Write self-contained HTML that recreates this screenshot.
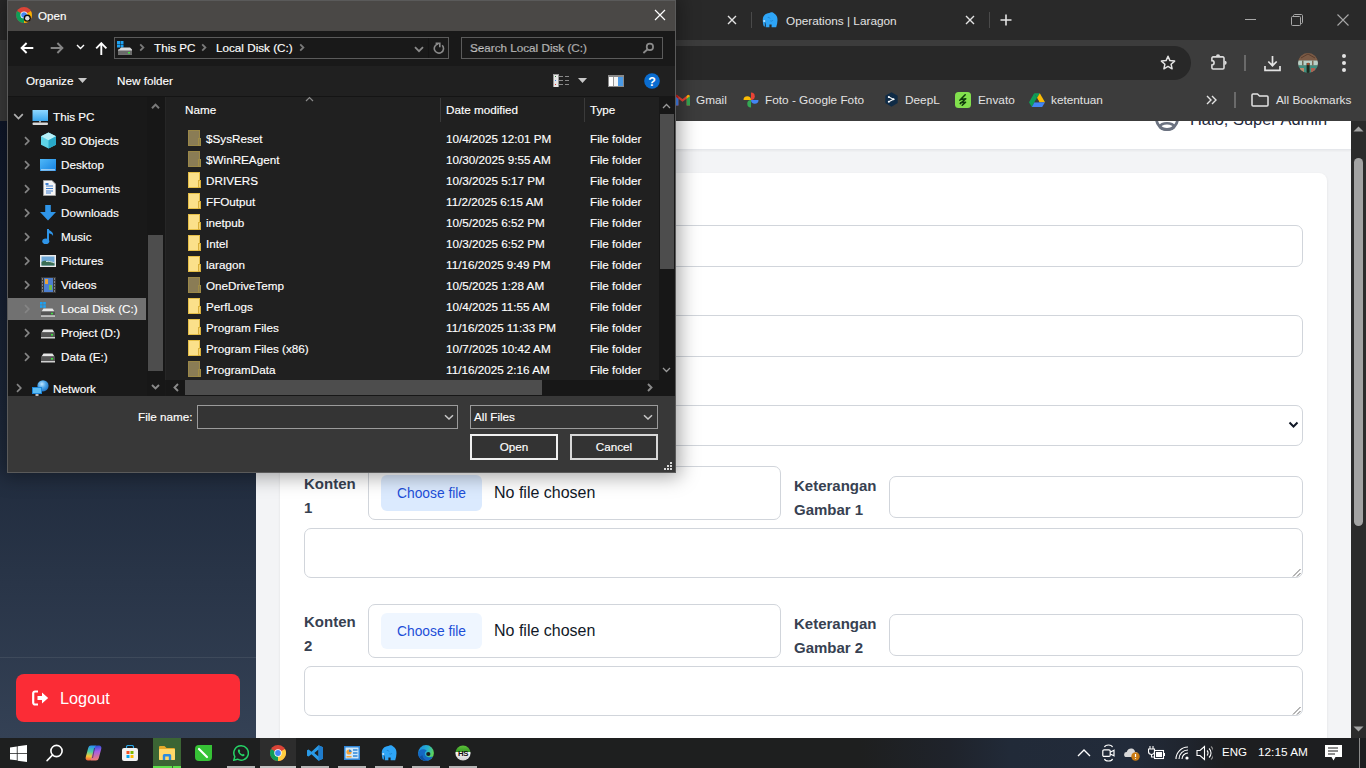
<!DOCTYPE html>
<html><head><meta charset="utf-8">
<style>
*{box-sizing:border-box;margin:0;padding:0}
html,body{width:1366px;height:768px;overflow:hidden;background:#1f1f1f;font-family:"Liberation Sans",sans-serif}
.a{position:absolute}
.t{position:absolute;white-space:nowrap;line-height:1}
/* chrome */
#tabs{left:0;top:0;width:1366px;height:40px;background:#292929}
#toolbar{left:0;top:40px;width:1366px;height:81px;background:#3c3c3c}
#omni{left:20px;top:46px;width:1171px;height:34px;border-radius:17px;background:#282828}
.bm{color:#e3e3e3;font-size:11.8px}
/* page */
#page{left:0;top:121px;width:1351px;height:617px;background:#f3f4f6;overflow:hidden}
#side{left:0;top:0;width:256px;height:617px;background:linear-gradient(#0f172a,#1e293b 50%,#344155)}
#hdr{left:256px;top:-10px;width:1095px;height:39px;background:#fff;border-bottom:1px solid #e5e7eb;box-shadow:0 1px 2px rgba(0,0,0,.05)}
#card{left:280px;top:52px;width:1047px;height:700px;background:#fff;border-radius:8px;box-shadow:0 1px 3px rgba(0,0,0,.08)}
.inp{position:absolute;background:#fff;border:1px solid #d1d5db;border-radius:7px}
.lbl{position:absolute;color:#374151;font-weight:700;font-size:15px;line-height:24px;white-space:nowrap}
#vsb{left:1351px;top:121px;width:15px;height:617px;background:#2b2b2b}
/* taskbar */
#task{left:0;top:738px;width:1366px;height:30px;background:linear-gradient(to right,#1e1f1f 0,#1e1f1f 860px,#1f232b 950px,#212a38 1010px,#222b3a 1130px,#1f242d 1190px,#1d1e20 1225px,#1d1e20 1366px)}
/* dialog */
#dlg{left:7px;top:0;width:669px;height:473px;background:#383838;border:1px solid #5a5a5a;box-shadow:0 0 18px 4px rgba(0,0,0,.35)}
.dt{position:absolute;white-space:nowrap;color:#fff;font-size:11.7px;line-height:16px;-webkit-text-stroke:0.15px #fff}
.fold{position:absolute;left:188px;width:12px;height:16px;background:#fbe08a;box-shadow:inset 0 0 0 1px #e6bf48}
.fold:after{content:"";position:absolute;left:10px;bottom:0;width:3px;height:8px;background:#f6d572;border:1px solid #d9b03c;box-sizing:border-box}
.fold.hid{background:#8a7c55;box-shadow:inset 0 0 0 1px #9b8848}
.fold.hid:after{background:#8f8050;border-color:#a08c46}
</style></head><body>
<!-- CHROME -->
<div class="a" id="tabs"></div>
<div class="a" id="toolbar"></div>
<div class="a" id="omni"></div>
<div class="t" style="left:786px;top:15.5px;color:#e3e3e3;font-size:11.8px">Operations | Laragon</div>
<div class="t bm" style="left:696px;top:95px">Gmail</div>
<div class="t bm" style="left:765px;top:95px">Foto - Google Foto</div>
<div class="t bm" style="left:905px;top:95px">DeepL</div>
<div class="t bm" style="left:978px;top:95px">Envato</div>
<div class="t bm" style="left:1051px;top:95px">ketentuan</div>
<div class="t bm" style="left:1276px;top:95px">All Bookmarks</div>
<!-- tab close / separators -->
<svg class="a" style="left:727px;top:15px" width="10" height="10" viewBox="0 0 10 10"><path d="M1 1L9 9M9 1L1 9" stroke="#e3e3e3" stroke-width="1.4"/></svg>
<div class="a" style="left:751px;top:12px;width:1px;height:16px;background:#4a4a4a"></div>
<svg class="a" style="left:761px;top:11px" width="17" height="17" viewBox="0 0 17 17"><path d="M1.8 9.5C1.5 5.2 4.2 2.3 8.3 2C9.8 0.9 12 1.2 13.2 2.6C15.6 3.8 16.6 6.3 16.5 9.3C16.4 11.6 16 13.8 15.2 16.2H10.6V13.4H8.4V16.2H4.7V12.5C4.3 13.8 3.9 15 3.2 16C2.2 14.5 1.9 12 1.8 9.5Z" fill="#2ea5f7"/><ellipse cx="3.2" cy="10" rx="1.1" ry="0.8" fill="#f2f8ff"/><path d="M4.1 11.5L4.6 15.6" stroke="#1a3550" stroke-width="0.8"/><path d="M6.5 7C7 6 8.5 6.2 9 7.5M9.3 9.8C10.3 10.5 11.5 10 12 9" stroke="#1c7fcc" stroke-width="0.8" fill="none"/></svg>
<svg class="a" style="left:965px;top:15px" width="10" height="10" viewBox="0 0 10 10"><path d="M1 1L9 9M9 1L1 9" stroke="#e3e3e3" stroke-width="1.4"/></svg>
<div class="a" style="left:989px;top:12px;width:1px;height:16px;background:#4a4a4a"></div>
<svg class="a" style="left:1000px;top:14px" width="12" height="12" viewBox="0 0 12 12"><path d="M6 0.5V11.5M0.5 6H11.5" stroke="#e3e3e3" stroke-width="1.6"/></svg>
<!-- window controls -->
<div class="a" style="left:1245px;top:19px;width:11px;height:1px;background:#a8a8a8"></div>
<svg class="a" style="left:1291px;top:14px" width="12" height="12" viewBox="0 0 12 12"><rect x="0.5" y="2.5" width="9" height="9" rx="1" stroke="#a8a8a8" fill="none"/><path d="M2.5 2.5V1.5C2.5 1 3 0.5 3.5 0.5H10.5C11 0.5 11.5 1 11.5 1.5V8.5C11.5 9 11 9.5 10.5 9.5H9.5" stroke="#a8a8a8" fill="none"/></svg>
<svg class="a" style="left:1337px;top:14px" width="12" height="12" viewBox="0 0 12 12"><path d="M0.5 0.5L11.5 11.5M11.5 0.5L0.5 11.5" stroke="#a8a8a8" stroke-width="1.1"/></svg>
<!-- toolbar icons -->
<svg class="a" style="left:1160px;top:55px" width="16" height="16" viewBox="0 0 16 16"><path d="M8 1.3L9.9 5.6L14.6 6.1L11.1 9.2L12.1 13.8L8 11.4L3.9 13.8L4.9 9.2L1.4 6.1L6.1 5.6Z" stroke="#e3e3e3" stroke-width="1.5" fill="none" stroke-linejoin="round"/></svg>
<svg class="a" style="left:1208px;top:52px" width="22" height="20" viewBox="0 0 22 20"><path d="M5.1 4.9H14.8A1.2 1.2 0 0 1 16 6.1V15.8A1.2 1.2 0 0 1 14.8 17H5.1A1.2 1.2 0 0 1 3.9 15.8V13A2.2 2.2 0 0 0 3.9 8.6V6.1A1.2 1.2 0 0 1 5.1 4.9Z" stroke="#dcdcdc" stroke-width="1.6" fill="none"/><path d="M7.9 4.4A2.1 2.1 0 0 1 12.1 4.4Z" fill="#dcdcdc"/><path d="M16.6 8.7A2.1 2.1 0 0 1 16.6 12.9Z" fill="#dcdcdc"/></svg>
<div class="a" style="left:1244px;top:55px;width:1.5px;height:16px;background:#6a6a6a"></div>
<svg class="a" style="left:1264px;top:55px" width="17" height="17" viewBox="0 0 17 17"><path d="M8.5 1V10.5M4.3 6.5L8.5 10.7L12.7 6.5" stroke="#e3e3e3" stroke-width="1.7" fill="none"/><path d="M1 11V15.3H16V11" stroke="#e3e3e3" stroke-width="1.7" fill="none"/></svg>
<svg class="a" style="left:1298px;top:53px" width="20" height="20" viewBox="0 0 20 20"><defs><clipPath id="av"><circle cx="10" cy="10" r="10"/></clipPath></defs><g clip-path="url(#av)"><rect width="20" height="20" fill="#5e4c3e"/><rect x="0" y="0" width="20" height="7.5" fill="#7a5a45"/><path d="M3 5L10 1L17 5" stroke="#5a3e2e" stroke-width="1" fill="none"/><rect x="0" y="7.5" width="20" height="5" fill="#b8cfc6"/><rect x="4" y="7.5" width="1.5" height="5" fill="#6a6a55"/><rect x="14" y="7.5" width="1.5" height="5" fill="#7a6a55"/><rect x="0" y="12.5" width="20" height="7.5" fill="#3f8f80"/><rect x="2" y="15" width="4" height="5" fill="#c08a6a"/><rect x="13" y="15" width="4" height="4" fill="#b06050"/><rect x="8.6" y="10" width="3" height="10" fill="#1f2a1e"/><circle cx="10.2" cy="11" r="1.3" fill="#a04a2a"/></g></svg>
<div class="a" style="left:1342px;top:54px;width:4px;height:4px;border-radius:2px;background:#e3e3e3"></div>
<div class="a" style="left:1342px;top:61px;width:4px;height:4px;border-radius:2px;background:#e3e3e3"></div>
<div class="a" style="left:1342px;top:68px;width:4px;height:4px;border-radius:2px;background:#e3e3e3"></div>
<!-- bookmark icons -->
<svg class="a" style="left:675px;top:94px" width="15" height="12" viewBox="0 0 15 12"><path d="M0 2V11.5H3.4V4.8L7.5 7.8L11.6 4.8V11.5H15V2L13.3 0.8L7.5 5L1.7 0.8Z" fill="#ea4335"/><path d="M0 2V11.5H3.4V4.8Z" fill="#4285f4"/><path d="M15 2V11.5H11.6V4.8Z" fill="#34a853"/><path d="M11.6 4.8L15 2L13.3 0.8L11.6 2Z" fill="#fbbc04"/><path d="M0 2L1.7 0.8L3.4 2V4.8Z" fill="#c5221f"/></svg>
<svg class="a" style="left:743px;top:92px" width="16" height="16" viewBox="0 0 16 16"><path d="M8 8H0.5A3.75 3.75 0 0 1 8 8Z" fill="#fbbc04"/><path d="M8 8V0.5A3.75 3.75 0 0 1 8 8Z" fill="#ea4335"/><path d="M8 8H15.5A3.75 3.75 0 0 1 8 8Z" fill="#4285f4"/><path d="M8 8V15.5A3.75 3.75 0 0 1 8 8Z" fill="#34a853"/></svg>
<svg class="a" style="left:885px;top:92px" width="13" height="15" viewBox="0 0 13 15"><path d="M6.5 0.3L12.7 3.8V11L6.5 14.7L0.3 11V3.8Z" fill="#0f2b46"/><path d="M3.8 5L8.5 7.3L3.8 9.8" stroke="#fff" stroke-width="1.1" fill="none"/><circle cx="3.8" cy="5" r="1" fill="#fff"/><circle cx="8.5" cy="7.3" r="1" fill="#fff"/><circle cx="3.8" cy="9.8" r="1" fill="#fff"/></svg>
<svg class="a" style="left:955px;top:92px" width="16" height="16" viewBox="0 0 16 16"><rect width="16" height="16" rx="3.5" fill="#82e04d"/><path d="M10.2 2.8L4.8 8.2M5.5 7.6L10.8 6.8L5.2 11.6M5.6 10.8L10.6 10.2L7.2 13.2" stroke="#0f3a0c" stroke-width="1.5" fill="none" stroke-linecap="round" stroke-linejoin="round"/></svg>
<svg class="a" style="left:1029px;top:93px" width="16" height="14" viewBox="0 0 16 14"><path d="M5.2 0.3H10.8L8 5.1Z" fill="#0f9d58"/><path d="M5.2 0.3L0 9.3L2.8 14L8 5.1Z" fill="#0f9d58"/><path d="M10.8 0.3L16 9.3H10.4L8 5.1Z" fill="#fbbc04"/><path d="M16 9.3L13.2 14H2.8L5.5 9.3Z" fill="#4285f4"/><path d="M8 5.1L10.4 9.3H5.5Z" fill="#3c3c3c"/></svg>
<svg class="a" style="left:1206px;top:95px" width="12" height="10" viewBox="0 0 12 10"><path d="M1 1L5 5L1 9M6 1L10 5L6 9" stroke="#e3e3e3" stroke-width="1.4" fill="none"/></svg>
<div class="a" style="left:1234px;top:92px;width:1.5px;height:16px;background:#6a6a6a"></div>
<svg class="a" style="left:1251px;top:93px" width="18" height="14" viewBox="0 0 18 14"><path d="M1 2A1 1 0 0 1 2 1H6.5L8.5 3H16A1 1 0 0 1 17 4V12A1 1 0 0 1 16 13H2A1 1 0 0 1 1 12Z" stroke="#e3e3e3" stroke-width="1.5" fill="none" stroke-linejoin="round"/></svg>

<!-- PAGE -->
<div class="a" id="page">
  <div class="a" id="side"></div>
  <div class="a" style="left:0;top:536px;width:256px;height:1px;background:rgba(255,255,255,.08)"></div>
  <div class="a" style="left:16px;top:553px;width:224px;height:48px;background:#fb2c36;border-radius:8px"></div>
  <div class="t" style="left:60px;top:569px;color:#fff;font-size:16.3px">Logout</div>
  <div class="a" id="hdr"></div>
  <div class="t" style="left:1190px;top:-10px;color:#1e293b;font-size:16.45px">Halo, Super Admin</div>
  <svg class="a" style="left:1155px;top:-14px" width="24" height="24" viewBox="0 0 24 24"><circle cx="12" cy="12" r="10.5" stroke="#6b7280" stroke-width="2.8" fill="none"/><circle cx="12" cy="9.5" r="4" fill="#6b7280"/><ellipse cx="12" cy="19.5" rx="7" ry="3.2" fill="none" stroke="#6b7280" stroke-width="2.6"/></svg>
  <div class="a" id="card"></div>
  <div class="inp" style="left:304px;top:104px;width:999px;height:42px"></div>
  <div class="inp" style="left:304px;top:194px;width:999px;height:42px"></div>
  <div class="inp" style="left:304px;top:284px;width:999px;height:41px"></div>
  <div class="lbl" style="left:304px;top:351px">Konten<br>1</div>
  <div class="inp" style="left:368px;top:345px;width:413px;height:54px"></div>
  <div class="a" style="left:381px;top:354px;width:101px;height:36px;background:#dbeafe;border-radius:6px"></div>
  <div class="t" style="left:397px;top:366px;color:#1d4ed8;font-size:13.8px">Choose file</div>
  <div class="t" style="left:494px;top:364px;color:#111827;font-size:16px">No file chosen</div>
  <div class="lbl" style="left:794px;top:353px">Keterangan<br>Gambar 1</div>
  <div class="inp" style="left:889px;top:355px;width:414px;height:42px"></div>
  <div class="inp" style="left:304px;top:407px;width:999px;height:50px"></div>
  <div class="lbl" style="left:304px;top:489px">Konten<br>2</div>
  <div class="inp" style="left:368px;top:483px;width:413px;height:54px"></div>
  <div class="a" style="left:381px;top:492px;width:101px;height:36px;background:#eff6ff;border-radius:6px"></div>
  <div class="t" style="left:397px;top:504px;color:#1d4ed8;font-size:13.8px">Choose file</div>
  <div class="t" style="left:494px;top:502px;color:#111827;font-size:16px">No file chosen</div>
  <div class="lbl" style="left:794px;top:491px">Keterangan<br>Gambar 2</div>
  <div class="inp" style="left:889px;top:493px;width:414px;height:42px"></div>
  <div class="inp" style="left:304px;top:545px;width:999px;height:50px"></div>
</div>
<div class="a" id="vsb"></div>
<!-- page extras -->
<svg class="a" style="left:1288px;top:421px" width="11" height="8" viewBox="0 0 11 8"><path d="M1.5 1.5L5.5 5.5L9.5 1.5" stroke="#111827" stroke-width="2" fill="none"/></svg>
<svg class="a" style="left:1292px;top:568px" width="9" height="9" viewBox="0 0 9 9"><path d="M8.5 1L1 8.5M8.5 5L5 8.5" stroke="#6b6b6b" stroke-width="1"/></svg>
<svg class="a" style="left:1292px;top:706px" width="9" height="9" viewBox="0 0 9 9"><path d="M8.5 1L1 8.5M8.5 5L5 8.5" stroke="#6b6b6b" stroke-width="1"/></svg>
<svg class="a" style="left:32px;top:690px" width="17" height="16" viewBox="0 0 17 16"><path d="M6 1.5H3A1.8 1.8 0 0 0 1.2 3.3V12.7A1.8 1.8 0 0 0 3 14.5H6" stroke="#fff" stroke-width="2.2" fill="none"/><path d="M5.5 6H10V2.5L16.2 8L10 13.5V10H5.5Z" fill="#fff"/></svg>
<!-- page scrollbar -->
<svg class="a" style="left:1353px;top:126px" width="11" height="6" viewBox="0 0 11 6"><path d="M0.5 5.5L5.5 0.5L10.5 5.5Z" fill="#a3a3a3"/></svg>
<div class="a" style="left:1354px;top:158px;width:9px;height:368px;border-radius:4.5px;background:#a3a3a3"></div>
<svg class="a" style="left:1353px;top:726px" width="11" height="6" viewBox="0 0 11 6"><path d="M0.5 0.5L10.5 0.5L5.5 5.5Z" fill="#a3a3a3"/></svg>

<!-- TASKBAR -->
<div class="a" id="task"></div>
<svg class="a" style="left:10px;top:745px" width="17" height="17" viewBox="0 0 17 17" fill="#fff"><path d="M0 2.4L6.8 1.4V7.9H0Z"/><path d="M7.6 1.3L17 0V7.9H7.6Z"/><path d="M0 8.7H6.8V15.3L0 14.4Z"/><path d="M7.6 8.7H17V17L7.6 15.7Z"/></svg>
<svg class="a" style="left:46px;top:744px" width="18" height="18" viewBox="0 0 18 18"><circle cx="10.5" cy="7" r="5.6" stroke="#fff" stroke-width="1.6" fill="none"/><path d="M6.5 11L1.2 16.5" stroke="#fff" stroke-width="1.8" stroke-linecap="round"/></svg>
<svg class="a" style="left:85px;top:745px" width="17" height="16" viewBox="0 0 17 16"><defs><linearGradient id="cp1" x1="0.3" y1="0" x2="0.2" y2="1"><stop offset="0" stop-color="#2a8ff0"/><stop offset=".4" stop-color="#4fd0a0"/><stop offset=".7" stop-color="#f4c838"/><stop offset="1" stop-color="#f25b3a"/></linearGradient><linearGradient id="cp2" x1="0.5" y1="0" x2="0.6" y2="1"><stop offset="0" stop-color="#2450d8"/><stop offset=".4" stop-color="#a35ee8"/><stop offset="1" stop-color="#f6806a"/></linearGradient></defs><path d="M6 0.5H11.5L7.5 13C7 14.8 6 15.5 4.5 15.5H3C1.2 15.5 0.2 14 0.7 12.2L3.2 3C3.7 1.3 4.6 0.5 6 0.5Z" fill="url(#cp1)"/><path d="M11 15.5H5.5L9.5 3C10 1.2 11 0.5 12.5 0.5H14C15.8 0.5 16.8 2 16.3 3.8L13.8 13C13.3 14.7 12.4 15.5 11 15.5Z" fill="url(#cp2)"/><path d="M9.5 3L7.5 13" stroke="#1a1a1a" stroke-width="0.9" opacity="0.6"/></svg>
<svg class="a" style="left:122px;top:745px" width="16" height="16" viewBox="0 0 16 16"><path d="M4.5 3V2A1.5 1.5 0 0 1 6 0.5H10A1.5 1.5 0 0 1 11.5 2V3" stroke="#29a7e8" stroke-width="1.2" fill="none"/><rect x="0" y="3" width="16" height="13" rx="2" fill="#f2f2f2"/><rect x="4.5" y="6" width="3" height="3" fill="#f25022"/><rect x="8.5" y="6" width="3" height="3" fill="#7fba00"/><rect x="4.5" y="10" width="3" height="3" fill="#00a4ef"/><rect x="8.5" y="10" width="3" height="3" fill="#ffb900"/></svg>
<div class="a" style="left:153px;top:738px;width:28px;height:30px;background:#3b6534"></div>
<div class="a" style="left:153px;top:766px;width:19px;height:2px;background:#5fe04a"></div>
<div class="a" style="left:173px;top:766px;width:8px;height:2px;background:#5fe04a"></div>
<svg class="a" style="left:159px;top:746px" width="16" height="14" viewBox="0 0 16 14"><path d="M0 1A1 1 0 0 1 1 0H5.5L7.5 2H15A1 1 0 0 1 16 3V13A1 1 0 0 1 15 14H1A1 1 0 0 1 0 13Z" fill="#e4a92a"/><rect x="0" y="3" width="16" height="11" rx="0.8" fill="#ffd86a"/><path d="M3.8 14V9.5A1.5 1.5 0 0 1 5.3 8H10.7A1.5 1.5 0 0 1 12.2 9.5V14H9.8V10.5H6.2V14Z" fill="#2b8be0"/></svg>
<svg class="a" style="left:195px;top:745px" width="17" height="16" viewBox="0 0 17 16"><path d="M0 4A4 4 0 0 1 4 0H17V12A4 4 0 0 1 13 16H4A4 4 0 0 1 0 12Z" fill="#36c236"/><path d="M4 4L12 12" stroke="#fff" stroke-width="2.2" stroke-linecap="round"/></svg>
<svg class="a" style="left:233px;top:745px" width="16" height="16" viewBox="0 0 16 16"><path d="M8 0.8A7.2 7.2 0 0 0 1.8 11.6L0.8 15.2L4.5 14.2A7.2 7.2 0 1 0 8 0.8Z" stroke="#25d366" stroke-width="1.5" fill="none"/><path d="M5.2 4.5C4.5 5.5 4.8 7.5 6.8 9.4C8.8 11.3 10.5 11.5 11.4 10.8L11.5 9.6L10 8.8L9.3 9.5C8.5 9.2 7 7.8 6.6 7L7.3 6.2L6.6 4.6Z" fill="#25d366"/></svg>
<div class="a" style="left:260px;top:738px;width:36px;height:30px;background:#2d2d2d"></div>
<svg class="a" style="left:270px;top:745px" width="16" height="16" viewBox="0 0 16 16"><circle cx="8" cy="8" r="8" fill="#db4437"/><path d="M8 8L1.07 4A8 8 0 0 0 8 16Z" fill="#0f9d58"/><path d="M8 8L8 16A8 8 0 0 0 14.93 4Z" fill="#ffcd40"/><circle cx="8" cy="8" r="3.7" fill="#fff"/><circle cx="8" cy="8" r="2.9" fill="#4285f4"/></svg>
<svg class="a" style="left:307px;top:745px" width="16" height="16" viewBox="0 0 16 16"><path d="M11.5 0.3L16 2.3V13.7L11.5 15.7L4.5 9.3L1.6 11.6L0 10.8V5.2L1.6 4.4L4.5 6.7ZM11.5 4.6L7.3 8L11.5 11.4Z" fill="#2a9ae6"/><path d="M11.5 0.3L16 2.3V13.7L11.5 15.7Z" fill="#1f7ccc"/></svg>
<svg class="a" style="left:344px;top:746px" width="16" height="14" viewBox="0 0 16 14"><rect x="0" y="0" width="16" height="14" fill="#2f86d8"/><rect x="1.5" y="1.5" width="13" height="11" fill="#cfe8fa"/><circle cx="5" cy="6" r="2.6" fill="#f3a33a"/><path d="M5 6V3.4A2.6 2.6 0 0 1 7.6 6Z" fill="#2f86d8"/><path d="M9 4H13.5M9 7H13.5M9 10H13.5" stroke="#2f86d8" stroke-width="1.3"/><rect x="2.5" y="10" width="5" height="1.5" fill="#f3a33a"/></svg>
<svg class="a" style="left:380px;top:744px" width="17" height="17" viewBox="0 0 17 17"><path d="M1.8 9.5C1.5 5.2 4.2 2.3 8.3 2C9.8 0.9 12 1.2 13.2 2.6C15.6 3.8 16.6 6.3 16.5 9.3C16.4 11.6 16 13.8 15.2 16.2H10.6V13.4H8.4V16.2H4.7V12.5C4.3 13.8 3.9 15 3.2 16C2.2 14.5 1.9 12 1.8 9.5Z" fill="#2ea5f7"/><ellipse cx="3.2" cy="10" rx="1.1" ry="0.8" fill="#f2f8ff"/><path d="M4.1 11.5L4.6 15.6" stroke="#1a3550" stroke-width="0.8"/><path d="M6.5 7C7 6 8.5 6.2 9 7.5M9.3 9.8C10.3 10.5 11.5 10 12 9" stroke="#1c7fcc" stroke-width="0.8" fill="none"/></svg>
<svg class="a" style="left:418px;top:745px" width="16" height="16" viewBox="0 0 16 16"><defs><linearGradient id="ed1" x1="0" y1="0.2" x2="1" y2="0.5"><stop offset="0" stop-color="#1a8be0"/><stop offset=".55" stop-color="#27b0d0"/><stop offset="1" stop-color="#62da4e"/></linearGradient></defs><circle cx="8" cy="8" r="7.9" fill="url(#ed1)"/><path d="M0.3 8.5C0.8 4.5 5.5 3 8.8 5.8C7.2 6.5 6.5 8 7 9.8C7.8 12.3 11.2 13 14.9 11.3C13.6 14.2 11 15.9 8 15.9C3.6 15.9 0.1 12.6 0.3 8.5Z" fill="#1468c4"/><path d="M1.5 12C3 14.5 5.5 15.9 8 15.9C9 15.9 10 15.7 11 15.3C7 15.5 4.5 13 4.5 10" fill="#0f4f9e"/><circle cx="10.3" cy="9" r="2.1" fill="#1c1c1c"/></svg>
<svg class="a" style="left:455px;top:745px" width="16" height="16" viewBox="0 0 16 16"><defs><linearGradient id="hsg" x1="0" y1="0" x2="0" y2="1"><stop offset="0" stop-color="#5cc43a"/><stop offset=".42" stop-color="#3a9a25"/><stop offset=".43" stop-color="#fafafa"/><stop offset="1" stop-color="#cfcfcf"/></linearGradient></defs><circle cx="8" cy="8" r="7.6" fill="url(#hsg)"/><text x="8" y="11.3" text-anchor="middle" font-family="Liberation Sans" font-weight="700" font-size="7.8" fill="#111" letter-spacing="-0.3">HS</text></svg>
<div class="a" style="left:227px;top:766px;width:28px;height:2px;background:#b5b5b5"></div>
<div class="a" style="left:260px;top:766px;width:36px;height:2px;background:#c4c4c4"></div>
<div class="a" style="left:301px;top:766px;width:28px;height:2px;background:#b5b5b5"></div>
<div class="a" style="left:338px;top:766px;width:28px;height:2px;background:#b5b5b5"></div>
<div class="a" style="left:375px;top:766px;width:28px;height:2px;background:#b5b5b5"></div>
<div class="a" style="left:412px;top:766px;width:28px;height:2px;background:#b5b5b5"></div>
<div class="a" style="left:449px;top:766px;width:28px;height:2px;background:#b5b5b5"></div>
<!-- tray -->
<svg class="a" style="left:1077px;top:748px" width="14" height="9" viewBox="0 0 14 9"><path d="M1 8L7 2L13 8" stroke="#fff" stroke-width="1.4" fill="none"/></svg>
<svg class="a" style="left:1102px;top:744px" width="13" height="18" viewBox="0 0 13 18"><path d="M2.5 3.2C2.8 1.8 4.5 1 6.5 1C8.5 1 10.2 1.8 10.5 3.2M2.5 14.8C2.8 16.2 4.5 17 6.5 17C8.5 17 10.2 16.2 10.5 14.8" stroke="#fff" stroke-width="1.1" fill="none"/><rect x="0.8" y="5.8" width="7.4" height="6.6" rx="1.2" stroke="#fff" stroke-width="1.2" fill="none"/><path d="M8.2 8.2L12 6.3V11.9L8.2 10" stroke="#fff" stroke-width="1.2" fill="none"/></svg>
<svg class="a" style="left:1124px;top:747px" width="17" height="14" viewBox="0 0 17 14"><path d="M2.5 10A2.5 2.5 0 0 1 2.7 5C3.5 2 6 1 8 1.5C10 2 11 3.5 11 5A2.5 2.5 0 0 1 12 10Z" fill="#d8d8d8"/><circle cx="11.5" cy="9.5" r="4.2" fill="#c97a12"/><path d="M11.5 7V10M11.5 11.3V12" stroke="#fff" stroke-width="1.2"/></svg>
<svg class="a" style="left:1148px;top:746px" width="17" height="14" viewBox="0 0 17 14"><path d="M2 0V3M5 0V3M0.5 3H6.5V5.5A3 3 0 0 1 3.5 8.5A3 3 0 0 1 0.5 5.5Z" stroke="#fff" stroke-width="1.1" fill="none"/><path d="M3.5 8.5V11H6" stroke="#fff" stroke-width="1.1" fill="none"/><rect x="6.5" y="4.5" width="9" height="8" stroke="#fff" stroke-width="1.1" fill="none"/><rect x="8" y="6" width="6" height="5" fill="#fff"/><rect x="15.5" y="7" width="1.5" height="3" fill="#fff"/></svg>
<svg class="a" style="left:1175px;top:746px" width="14" height="14" viewBox="0 0 14 14"><path d="M1 13A12 12 0 0 1 13 1M4 13A9 9 0 0 1 13 4M7 13A6 6 0 0 1 13 7" stroke="#fff" stroke-width="1.1" fill="none"/><circle cx="12" cy="12" r="1.6" fill="#fff"/></svg>
<svg class="a" style="left:1196px;top:745px" width="17" height="16" viewBox="0 0 17 16"><path d="M1 5.5H4L8.5 1.5V14.5L4 10.5H1Z" stroke="#fff" stroke-width="1.1" fill="none"/><path d="M11 5.5A3.5 3.5 0 0 1 11 10.5M13 3.5A6 6 0 0 1 13 12.5" stroke="#fff" stroke-width="1.1" fill="none"/><path d="M15 1.5A9 9 0 0 1 15 14.5" stroke="#888" stroke-width="1.1" fill="none"/></svg>
<div class="t" style="left:1222px;top:747px;color:#fff;font-size:11.5px">ENG</div>
<div class="t" style="left:1258px;top:747px;color:#fff;font-size:11.8px">12:15 AM</div>
<svg class="a" style="left:1325px;top:745px" width="17" height="16" viewBox="0 0 17 16"><path d="M0 0H17V12H10.5L8.5 15.5L6.5 12H0Z" fill="#fff"/><path d="M3 3H13M3 6H13M3 9H10" stroke="#1a1a1a" stroke-width="1"/></svg>
<div class="a" style="left:1359px;top:738px;width:1px;height:30px;background:#8a8a8a"></div>

<!-- DIALOG -->
<div class="a" id="dlg"></div>
<div class="a" style="left:8px;top:1px;width:667px;height:30px;background:#4a4846"></div>
<svg class="a" style="left:16px;top:7px" width="16" height="16" viewBox="0 0 16 16">
 <circle cx="8" cy="8" r="8" fill="#db4437"/>
 <path d="M8 8 L1.1 4 A8 8 0 0 0 8 16 Z" fill="#0f9d58"/>
 <path d="M8 8 L8 16 A8 8 0 0 0 14.9 4 Z" fill="#f4b400"/>
 <circle cx="8" cy="8" r="3.6" fill="#fff"/><circle cx="8" cy="8" r="2.8" fill="#4285f4"/>
 <circle cx="11.3" cy="11.2" r="3.6" fill="#111"/><circle cx="11.3" cy="11.2" r="2.2" fill="#ddd"/>
</svg>
<div class="dt" style="left:38px;top:8px;font-size:11.6px">Open</div>
<svg class="a" style="left:654px;top:9px" width="12" height="12" viewBox="0 0 12 12"><path d="M1 1L11 11M11 1L1 11" stroke="#fff" stroke-width="1.2"/></svg>

<!-- nav row -->
<div class="a" style="left:8px;top:31px;width:667px;height:35px;background:#191919"></div>
<svg class="a" style="left:20px;top:42px" width="14" height="13" viewBox="0 0 14 13"><path d="M13.3 6H2M6.6 1L1.6 6L6.6 11" stroke="#fff" stroke-width="1.9" fill="none"/></svg>
<svg class="a" style="left:50px;top:42px" width="14" height="13" viewBox="0 0 14 13"><path d="M0.7 6H12M7.4 1L12.4 6L7.4 11" stroke="#858585" stroke-width="1.9" fill="none"/></svg>
<svg class="a" style="left:76px;top:44px" width="9" height="6" viewBox="0 0 9 6"><path d="M1 1L4.5 4.5L8 1" stroke="#fff" stroke-width="1.4" fill="none"/></svg>
<svg class="a" style="left:95px;top:42px" width="13" height="13" viewBox="0 0 13 13"><path d="M6.3 13V1.8M1.2 6.3L6.3 1.2L11.4 6.3" stroke="#fff" stroke-width="1.9" fill="none"/></svg>
<div class="a" style="left:114px;top:37px;width:335px;height:22px;border:1px solid #5b5b5b;background:#191919"></div>
<svg class="a" style="left:117px;top:41px" width="16" height="15" viewBox="0 0 16 15">
 <rect x="0" y="0" width="3" height="3" fill="#1da1f2"/><rect x="3.5" y="0" width="3" height="3" fill="#1da1f2"/><rect x="0" y="3.5" width="3" height="3" fill="#1da1f2"/><rect x="3.5" y="3.5" width="3" height="3" fill="#1da1f2"/>
 <path d="M2 8.5L4 6.5H13L15 8.5V13.5H1V8.5Z" fill="#d9d9d9"/><rect x="1" y="9.5" width="14" height="4" fill="#6a6a6a"/><rect x="11" y="11" width="2" height="1.5" fill="#3ee03e"/>
</svg>
<svg class="a" style="left:139px;top:43px" width="6" height="9" viewBox="0 0 6 9"><path d="M1.2 1.3L4.4 4.5L1.2 7.7" stroke="#7a7a7a" stroke-width="1.8" fill="none"/></svg>
<div class="dt" style="left:154px;top:40px">This PC</div>
<svg class="a" style="left:201px;top:43px" width="6" height="9" viewBox="0 0 6 9"><path d="M1.2 1.3L4.4 4.5L1.2 7.7" stroke="#7a7a7a" stroke-width="1.8" fill="none"/></svg>
<div class="dt" style="left:216px;top:40px">Local Disk (C:)</div>
<svg class="a" style="left:299px;top:43px" width="6" height="9" viewBox="0 0 6 9"><path d="M1.2 1.3L4.4 4.5L1.2 7.7" stroke="#7a7a7a" stroke-width="1.8" fill="none"/></svg>
<svg class="a" style="left:414px;top:46px" width="10" height="7" viewBox="0 0 10 7"><path d="M1 1.2L5 5.2L9 1.2" stroke="#8a8a8a" stroke-width="1.8" fill="none"/></svg>
<div class="a" style="left:428px;top:38px;width:1px;height:20px;background:#141414"></div>
<svg class="a" style="left:433px;top:41px" width="13" height="14" viewBox="0 0 13 14"><path d="M9.2 4.3A4.6 4.6 0 1 1 5.3 2.95" stroke="#8a8a8a" stroke-width="1.6" fill="none"/><path d="M2.6 2.3H6.8V6.3" stroke="#8a8a8a" stroke-width="1.6" fill="none"/></svg>
<div class="a" style="left:461px;top:37px;width:202px;height:22px;border:1px solid #5b5b5b;background:#191919"></div>
<div class="dt" style="left:470px;top:40px;color:#9d9d9d">Search Local Disk (C:)</div>
<svg class="a" style="left:642px;top:42px" width="12" height="12" viewBox="0 0 12 12"><circle cx="7.9" cy="4.9" r="3.2" stroke="#8a8a8a" stroke-width="1.7" fill="none"/><path d="M5.6 7.3L1.4 11" stroke="#8a8a8a" stroke-width="1.8"/></svg>

<!-- command bar -->
<div class="a" style="left:8px;top:66px;width:667px;height:30px;background:#202020"></div>
<div class="dt" style="left:26px;top:73px">Organize</div>
<svg class="a" style="left:78px;top:78px" width="9" height="5" viewBox="0 0 9 5"><path d="M0 0H9L4.5 5Z" fill="#c8c8c8"/></svg>
<div class="dt" style="left:117px;top:73px">New folder</div>
<svg class="a" style="left:553px;top:74px" width="17" height="13" viewBox="0 0 17 13" shape-rendering="crispEdges"><rect x="0" y="0" width="5" height="13" fill="#e6e6e6"/><rect x="0" y="0" width="5" height="13" fill="none" stroke="#9a9a9a" stroke-width="1"/><rect x="2" y="2" width="1" height="1" fill="#2e7d32"/><rect x="2" y="6" width="1" height="1" fill="#3b82f6"/><rect x="2" y="10" width="1" height="1" fill="#e53935"/><path d="M6 2.5H10M12 2.5H16M6 6.5H10M12 6.5H16M6 10.5H10M12 10.5H16" stroke="#8a8a8a" stroke-width="1"/></svg>
<svg class="a" style="left:578px;top:78px" width="9" height="5" viewBox="0 0 9 5"><path d="M0 0H9L4.5 5Z" fill="#c8c8c8"/></svg>
<svg class="a" style="left:608px;top:75px" width="16" height="12" viewBox="0 0 16 12" shape-rendering="crispEdges"><rect x="0" y="0" width="16" height="12" fill="#8a8a8a"/><rect x="1" y="2" width="4" height="9" fill="#fff"/><rect x="5" y="2" width="1" height="9" fill="#9a9a9a"/><rect x="6" y="2" width="4" height="9" fill="#f4f4f4"/><rect x="10" y="2" width="5" height="9" fill="#4a9ae6"/></svg>
<svg class="a" style="left:644px;top:73px" width="16" height="16" viewBox="0 0 16 16"><circle cx="8" cy="8" r="7.8" fill="#0a6ccf"/><text x="8" y="12.6" text-anchor="middle" font-family="Liberation Sans" font-weight="700" font-size="12.5" fill="#fff">?</text></svg>

<!-- main area -->
<div class="a" style="left:8px;top:96px;width:667px;height:300px;background:#191919"></div>
<div class="a" style="left:147px;top:96px;width:18px;height:300px;background:#171717"></div>
<div class="a" style="left:148px;top:235px;width:15px;height:136px;background:#4d4d4d"></div>
<svg class="a" style="left:151px;top:103px" width="9" height="6" viewBox="0 0 9 6"><path d="M1 5.2L4.5 1.6L8 5.2" stroke="#7a7a7a" stroke-width="2" fill="none"/></svg>
<svg class="a" style="left:151px;top:384px" width="9" height="6" viewBox="0 0 9 6"><path d="M1 1L4.5 4.5L8 1" stroke="#8a8a8a" stroke-width="1.9" fill="none"/></svg>
<div class="a" style="left:165px;top:97px;width:2px;height:283px;background:#262626"></div>
<div class="a" style="left:166px;top:96px;width:493px;height:284px;background:#202020"></div>
<div class="a" style="left:8px;top:96px;width:667px;height:1px;background:#141414"></div>

<!-- nav pane -->
<div class="a" style="left:8px;top:298px;width:138px;height:22px;background:#717171"></div>
<svg class="a" style="left:13px;top:113px" width="11" height="7" viewBox="0 0 11 7"><path d="M1.2 1.2L5.5 5.5L9.8 1.2" stroke="#b0b0b0" stroke-width="1.7" fill="none"/></svg>
<svg class="a" style="left:32px;top:110px" width="16" height="15" viewBox="0 0 16 15"><defs><linearGradient id="mon" x1="0" y1="0" x2="0" y2="1"><stop offset="0" stop-color="#8fd8ff"/><stop offset="1" stop-color="#3aa6ec"/></linearGradient></defs><rect x="0.5" y="0" width="15.5" height="11" fill="url(#mon)"/><rect x="7" y="11" width="2" height="1.5" fill="#aaa"/><rect x="0.5" y="12.5" width="15.5" height="2.5" rx="1" fill="#d8d8d8"/></svg>
<div class="dt" style="left:53px;top:109px">This PC</div>
<svg class="a" style="left:24px;top:136px" width="6" height="10" viewBox="0 0 6 10"><path d="M1 1.2L4.8 5L1 8.8" stroke="#858585" stroke-width="1.7" fill="none"/></svg>
<div class="dt" style="left:61px;top:133px">3D Objects</div>
<svg class="a" style="left:24px;top:160px" width="6" height="10" viewBox="0 0 6 10"><path d="M1 1.2L4.8 5L1 8.8" stroke="#858585" stroke-width="1.7" fill="none"/></svg>
<div class="dt" style="left:61px;top:157px">Desktop</div>
<svg class="a" style="left:24px;top:184px" width="6" height="10" viewBox="0 0 6 10"><path d="M1 1.2L4.8 5L1 8.8" stroke="#858585" stroke-width="1.7" fill="none"/></svg>
<div class="dt" style="left:61px;top:181px">Documents</div>
<svg class="a" style="left:24px;top:208px" width="6" height="10" viewBox="0 0 6 10"><path d="M1 1.2L4.8 5L1 8.8" stroke="#858585" stroke-width="1.7" fill="none"/></svg>
<div class="dt" style="left:61px;top:205px">Downloads</div>
<svg class="a" style="left:24px;top:232px" width="6" height="10" viewBox="0 0 6 10"><path d="M1 1.2L4.8 5L1 8.8" stroke="#858585" stroke-width="1.7" fill="none"/></svg>
<div class="dt" style="left:61px;top:229px">Music</div>
<svg class="a" style="left:24px;top:256px" width="6" height="10" viewBox="0 0 6 10"><path d="M1 1.2L4.8 5L1 8.8" stroke="#858585" stroke-width="1.7" fill="none"/></svg>
<div class="dt" style="left:61px;top:253px">Pictures</div>
<svg class="a" style="left:24px;top:280px" width="6" height="10" viewBox="0 0 6 10"><path d="M1 1.2L4.8 5L1 8.8" stroke="#858585" stroke-width="1.7" fill="none"/></svg>
<div class="dt" style="left:61px;top:277px">Videos</div>
<svg class="a" style="left:24px;top:304px" width="6" height="10" viewBox="0 0 6 10"><path d="M1 1.2L4.8 5L1 8.8" stroke="#858585" stroke-width="1.7" fill="none"/></svg>
<div class="dt" style="left:61px;top:301px">Local Disk (C:)</div>
<svg class="a" style="left:24px;top:328px" width="6" height="10" viewBox="0 0 6 10"><path d="M1 1.2L4.8 5L1 8.8" stroke="#858585" stroke-width="1.7" fill="none"/></svg>
<div class="dt" style="left:61px;top:325px">Project (D:)</div>
<svg class="a" style="left:24px;top:352px" width="6" height="10" viewBox="0 0 6 10"><path d="M1 1.2L4.8 5L1 8.8" stroke="#858585" stroke-width="1.7" fill="none"/></svg>
<div class="dt" style="left:61px;top:349px">Data (E:)</div>
<svg class="a" style="left:40px;top:132px" width="17" height="17" viewBox="0 0 17 17"><path d="M8.5 0.5L16 4.3V12.7L8.5 16.5L1 12.7V4.3Z" fill="#5fd4e8"/><path d="M1 4.3L8.5 8.2L16 4.3L8.5 0.5Z" fill="#b7f0f8"/><path d="M8.5 8.2V16.5L16 12.7V4.3Z" fill="#29a9c9"/></svg>
<svg class="a" style="left:40px;top:159px" width="16" height="12" viewBox="0 0 16 12"><defs><linearGradient id="dsk" x1="0" y1="0" x2="1" y2="1"><stop offset="0" stop-color="#4fb8f8"/><stop offset="1" stop-color="#1681e0"/></linearGradient></defs><rect x="0" y="0" width="16" height="12" fill="url(#dsk)"/><rect x="1" y="10.5" width="14" height="0.8" fill="#fff"/></svg>
<svg class="a" style="left:43px;top:180px" width="13" height="16" viewBox="0 0 13 16"><path d="M0.5 0.5H9L12.5 4V15.5H0.5Z" fill="#f5f5f5" stroke="#9e9e9e"/><path d="M3 6H10M3 8.5H10M3 11H10M3 13H8" stroke="#3f7fd0" stroke-width="1"/><rect x="2.5" y="3" width="3" height="2" fill="#3f7fd0"/></svg>
<svg class="a" style="left:40px;top:205px" width="16" height="16" viewBox="0 0 16 16"><path d="M5.2 0H10.8V7H16L8 15.5L0 7H5.2Z" fill="#2f95e8"/></svg>
<svg class="a" style="left:42px;top:228px" width="13" height="17" viewBox="0 0 13 17"><path d="M6 1V12.5" stroke="#2f95e8" stroke-width="2"/><ellipse cx="3.8" cy="13.3" rx="3.5" ry="2.8" fill="#2f95e8"/><path d="M6 1C8 3 12 4 11 8C10.5 6 8 5.5 6.5 5" fill="#2f95e8"/></svg>
<svg class="a" style="left:40px;top:255px" width="16" height="12" viewBox="0 0 16 12"><rect x="0" y="0" width="16" height="12" fill="#ececec"/><rect x="1.5" y="1.5" width="13" height="9" fill="#6fa8d8"/><path d="M1.5 7C4 5 8 5.5 14.5 8V10.5H1.5Z" fill="#3b6e55"/><path d="M6 6.5C9 6 12 7 14.5 8" stroke="#cfe3e0" stroke-width="1" fill="none"/></svg>
<svg class="a" style="left:41px;top:277px" width="15" height="16" viewBox="0 0 15 16"><rect x="0" y="0" width="15" height="16" fill="#3a3a3a"/><rect x="3" y="1" width="9" height="14" fill="#4d7fcf"/><rect x="4" y="2" width="3" height="5" fill="#e7a33b"/><rect x="8" y="8" width="3" height="5" fill="#6dbb4a"/><path d="M1 2H2M1 5H2M1 8H2M1 11H2M1 14H2M13 2H14M13 5H14M13 8H14M13 11H14M13 14H14" stroke="#ccc"/></svg>
<svg class="a" style="left:40px;top:302px" width="16" height="15" viewBox="0 0 16 15"><rect x="0" y="0" width="2.6" height="2.6" fill="#1da1f2"/><rect x="3.2" y="0" width="2.6" height="2.6" fill="#1da1f2"/><rect x="0" y="3.2" width="2.6" height="2.6" fill="#1da1f2"/><rect x="3.2" y="3.2" width="2.6" height="2.6" fill="#1da1f2"/><path d="M1.5 9.5L3.5 6.5H12.5L14.5 9.5Z" fill="#e6e6e6"/><rect x="1" y="9.5" width="14" height="4" fill="#555"/><rect x="1" y="13.3" width="14" height="1.5" fill="#d0d0d0"/><rect x="11" y="10.8" width="2" height="1.5" fill="#3ee03e"/></svg>
<svg class="a" style="left:40px;top:328px" width="16" height="12" viewBox="0 0 16 12"><path d="M1.5 4.5L3.5 1.5H12.5L14.5 4.5Z" fill="#e6e6e6"/><rect x="1" y="4.5" width="14" height="4.5" fill="#555"/><rect x="1" y="9" width="14" height="1.5" fill="#d0d0d0"/><rect x="11" y="6" width="2" height="1.6" fill="#3ee03e"/></svg>
<svg class="a" style="left:40px;top:352px" width="16" height="12" viewBox="0 0 16 12"><path d="M1.5 4.5L3.5 1.5H12.5L14.5 4.5Z" fill="#e6e6e6"/><rect x="1" y="4.5" width="14" height="4.5" fill="#555"/><rect x="1" y="9" width="14" height="1.5" fill="#d0d0d0"/><rect x="11" y="6" width="2" height="1.6" fill="#3ee03e"/></svg>
<svg class="a" style="left:16px;top:383px" width="6" height="10" viewBox="0 0 6 10"><path d="M1 1.2L4.8 5L1 8.8" stroke="#858585" stroke-width="1.7" fill="none"/></svg>
<svg class="a" style="left:32px;top:380px" width="17" height="16" viewBox="0 0 17 16"><defs><radialGradient id="glb" cx="0.4" cy="0.35" r="0.7"><stop offset="0" stop-color="#bfe6ff"/><stop offset=".5" stop-color="#4aa3e6"/><stop offset="1" stop-color="#1e6fc0"/></radialGradient></defs><circle cx="11" cy="5.8" r="5.6" fill="url(#glb)"/><rect x="0" y="7" width="10" height="7" fill="#1f86d8"/><rect x="1" y="8" width="8" height="5" fill="#5bbcf5"/><rect x="3.5" y="14" width="3" height="2" fill="#bbb"/></svg>
<div class="dt" style="left:53px;top:381px">Network</div>
<!-- file list -->
<svg class="a" style="left:305px;top:96px" width="9" height="6" viewBox="0 0 9 6"><path d="M1 5L4.5 1.5L8 5" stroke="#8a8a8a" stroke-width="1.2" fill="none"/></svg>
<div class="dt" style="left:185px;top:102px">Name</div>
<div class="a" style="left:440px;top:98px;width:1px;height:24px;background:#3a3a3a"></div>
<div class="dt" style="left:446px;top:102px">Date modified</div>
<div class="a" style="left:584px;top:98px;width:1px;height:24px;background:#3a3a3a"></div>
<div class="dt" style="left:590px;top:102px">Type</div>
<div class="fold hid" style="top:130px"></div>
<div class="dt" style="left:206px;top:131px">$SysReset</div>
<div class="dt" style="left:446px;top:131px">10/4/2025 12:01 PM</div>
<div class="dt" style="left:590px;top:131px">File folder</div>
<div class="fold hid" style="top:151px"></div>
<div class="dt" style="left:206px;top:152px">$WinREAgent</div>
<div class="dt" style="left:446px;top:152px">10/30/2025 9:55 AM</div>
<div class="dt" style="left:590px;top:152px">File folder</div>
<div class="fold" style="top:172px"></div>
<div class="dt" style="left:206px;top:173px">DRIVERS</div>
<div class="dt" style="left:446px;top:173px">10/3/2025 5:17 PM</div>
<div class="dt" style="left:590px;top:173px">File folder</div>
<div class="fold" style="top:193px"></div>
<div class="dt" style="left:206px;top:194px">FFOutput</div>
<div class="dt" style="left:446px;top:194px">11/2/2025 6:15 AM</div>
<div class="dt" style="left:590px;top:194px">File folder</div>
<div class="fold" style="top:214px"></div>
<div class="dt" style="left:206px;top:215px">inetpub</div>
<div class="dt" style="left:446px;top:215px">10/5/2025 6:52 PM</div>
<div class="dt" style="left:590px;top:215px">File folder</div>
<div class="fold" style="top:235px"></div>
<div class="dt" style="left:206px;top:236px">Intel</div>
<div class="dt" style="left:446px;top:236px">10/3/2025 6:52 PM</div>
<div class="dt" style="left:590px;top:236px">File folder</div>
<div class="fold" style="top:256px"></div>
<div class="dt" style="left:206px;top:257px">laragon</div>
<div class="dt" style="left:446px;top:257px">11/16/2025 9:49 PM</div>
<div class="dt" style="left:590px;top:257px">File folder</div>
<div class="fold hid" style="top:277px"></div>
<div class="dt" style="left:206px;top:278px">OneDriveTemp</div>
<div class="dt" style="left:446px;top:278px">10/5/2025 1:28 AM</div>
<div class="dt" style="left:590px;top:278px">File folder</div>
<div class="fold" style="top:298px"></div>
<div class="dt" style="left:206px;top:299px">PerfLogs</div>
<div class="dt" style="left:446px;top:299px">10/4/2025 11:55 AM</div>
<div class="dt" style="left:590px;top:299px">File folder</div>
<div class="fold" style="top:319px"></div>
<div class="dt" style="left:206px;top:320px">Program Files</div>
<div class="dt" style="left:446px;top:320px">11/16/2025 11:33 PM</div>
<div class="dt" style="left:590px;top:320px">File folder</div>
<div class="fold" style="top:340px"></div>
<div class="dt" style="left:206px;top:341px">Program Files (x86)</div>
<div class="dt" style="left:446px;top:341px">10/7/2025 10:42 AM</div>
<div class="dt" style="left:590px;top:341px">File folder</div>
<div class="fold hid" style="top:361px"></div>
<div class="dt" style="left:206px;top:362px">ProgramData</div>
<div class="dt" style="left:446px;top:362px">11/16/2025 2:16 AM</div>
<div class="dt" style="left:590px;top:362px">File folder</div>
<!-- v scrollbar -->
<div class="a" style="left:659px;top:96px;width:16px;height:284px;background:#171717"></div>
<div class="a" style="left:660px;top:114px;width:14px;height:155px;background:#4d4d4d"></div>
<svg class="a" style="left:662px;top:103px" width="9" height="6" viewBox="0 0 9 6"><path d="M1 5L4.5 1.5L8 5" stroke="#9a9a9a" stroke-width="1.3" fill="none"/></svg>
<svg class="a" style="left:662px;top:367px" width="9" height="6" viewBox="0 0 9 6"><path d="M1 1L4.5 4.5L8 1" stroke="#9a9a9a" stroke-width="1.3" fill="none"/></svg>
<!-- h scrollbar -->
<div class="a" style="left:166px;top:380px;width:509px;height:16px;background:#171717"></div>
<div class="a" style="left:185px;top:380px;width:357px;height:15px;background:#4d4d4d"></div>
<svg class="a" style="left:173px;top:383px" width="6" height="9" viewBox="0 0 6 9"><path d="M5 1L1.5 4.5L5 8" stroke="#8a8a8a" stroke-width="1.9" fill="none"/></svg>
<svg class="a" style="left:647px;top:383px" width="6" height="9" viewBox="0 0 6 9"><path d="M1 1L4.5 4.5L1 8" stroke="#8a8a8a" stroke-width="1.9" fill="none"/></svg>
<!-- bottom -->
<div class="dt" style="left:138px;top:409px">File name:</div>
<div class="a" style="left:197px;top:405px;width:261px;height:24px;border:1px solid #9b9b9b;background:#343434"></div>
<svg class="a" style="left:444px;top:414px" width="10" height="6" viewBox="0 0 10 6"><path d="M1 1.2L5 5L9 1.2" stroke="#c8c8c8" stroke-width="1.5" fill="none"/></svg>
<div class="a" style="left:470px;top:405px;width:188px;height:24px;border:1px solid #9b9b9b;background:#343434"></div>
<div class="dt" style="left:474px;top:409px">All Files</div>
<svg class="a" style="left:643px;top:414px" width="10" height="6" viewBox="0 0 10 6"><path d="M1 1.2L5 5L9 1.2" stroke="#c8c8c8" stroke-width="1.5" fill="none"/></svg>
<div class="a" style="left:470px;top:434px;width:88px;height:26px;border:2px solid #f0f0f0;background:#333"></div>
<div class="dt" style="left:470px;top:439px;width:88px;text-align:center">Open</div>
<div class="a" style="left:570px;top:434px;width:88px;height:26px;border:2px solid #d8d8d8;background:#333"></div>
<div class="dt" style="left:570px;top:439px;width:88px;text-align:center">Cancel</div>
<svg class="a" style="left:664px;top:462px" width="8" height="8" viewBox="0 0 8 8" fill="#d8d8d8" shape-rendering="crispEdges"><rect x="6" y="0" width="2" height="2"/><rect x="3" y="3" width="2" height="2"/><rect x="6" y="3" width="2" height="2"/><rect x="0" y="6" width="2" height="2"/><rect x="3" y="6" width="2" height="2"/><rect x="6" y="6" width="2" height="2"/></svg>

</body></html>
